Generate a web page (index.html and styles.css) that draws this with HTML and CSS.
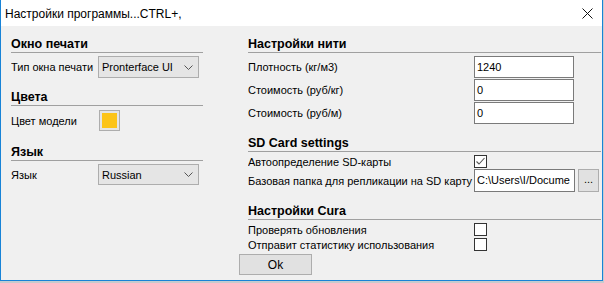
FILE: index.html
```html
<!DOCTYPE html>
<html lang="ru">
<head>
  <meta charset="UTF-8" />
  <title>Настройки программы</title>
  <link rel="stylesheet" href="styles.css">
</head>
<body>

  <div class="window">
    <div class="titlebar">
      <span class="title">Настройки программы...CTRL+,</span>
      <svg class="close" width="11" height="11" viewBox="0 0 11 11">
        <path d="M0.5 0.5 L10.5 10.5 M10.5 0.5 L0.5 10.5" stroke="#111" stroke-width="1" fill="none" />
      </svg>
    </div>

    <div class="content">
      <div class="columns">

        <!-- левая колонка -->
        <div class="col col-left">
          <h2 class="group-title">Окно печати</h2>
          <div class="row row-first">
            <span class="label">Тип окна печати</span>
            <div class="select">
              <span>Pronterface UI</span>
              <svg class="chevron" width="9" height="5" viewBox="0 0 9 5"><path d="M0.5 0.5 L4.5 4.5 L8.5 0.5" stroke="#555" fill="none" /></svg>
            </div>
          </div>

          <h2 class="group-title colors-title">Цвета</h2>
          <div class="row row-swatch">
            <span class="label">Цвет модели</span>
            <div class="swatch"><div class="swatch-fill"></div></div>
          </div>

          <h2 class="group-title lang-title">Язык</h2>
          <div class="row row-first">
            <span class="label">Язык</span>
            <div class="select select-short">
              <span>Russian</span>
              <svg class="chevron" width="9" height="5" viewBox="0 0 9 5"><path d="M0.5 0.5 L4.5 4.5 L8.5 0.5" stroke="#555" fill="none" /></svg>
            </div>
          </div>
        </div>

        <!-- правая колонка -->
        <div class="col col-right">
          <h2 class="group-title">Настройки нити</h2>
          <div class="row row-first">
            <span class="label wide">Плотность (кг/м3)</span>
            <div class="input">1240</div>
          </div>
          <div class="row row-next">
            <span class="label wide">Стоимость (руб/кг)</span>
            <div class="input">0</div>
          </div>
          <div class="row row-next">
            <span class="label wide">Стоимость (руб/м)</span>
            <div class="input">0</div>
          </div>

          <h2 class="group-title sd-title">SD Card settings</h2>
          <div class="row row-check">
            <span class="label wide">Автоопределение SD-карты</span>
            <div class="checkbox">
              <svg width="11" height="11" viewBox="0 0 11 11"><path d="M1.5 5.5 L4 8 L9.5 2" stroke="#555" stroke-width="1.1" fill="none" /></svg>
            </div>
          </div>
          <div class="row row-path">
            <span class="label wide">Базовая папка для репликации на SD карту</span>
            <div class="input input-path">C:\Users\I/Docume</div>
            <div class="browse">...</div>
          </div>

          <h2 class="group-title cura-title">Настройки Cura</h2>
          <div class="row row-check first-check">
            <span class="label wide">Проверять обновления</span>
            <div class="checkbox"></div>
          </div>
          <div class="row row-check second-check">
            <span class="label wide">Отправит статистику использования</span>
            <div class="checkbox"></div>
          </div>
        </div>

      </div>

      <div class="footer">
        <button class="ok">Ok</button>
      </div>
    </div>
  </div>

</body>
</html>
```

FILE: styles.css
```css
html {
  background: #c7cbce;
}

body {
  margin: 0;
  font-family: 'Liberation Sans', Arial, sans-serif;
  font-size: 11px;
  color: #000;
}

.window {
  width: 603px;
  height: 281px;
  box-sizing: border-box;
  border: 1px solid #1883d7;
  border-top: none;
  background: #f0f0f0;
}

.titlebar {
  height: 26px;
  background: #fff;
  display: flex;
  align-items: center;
  padding-left: 4px;
  padding-right: 9px;
}

.title {
  flex: 1;
  font-size: 12px;
  padding-top: 1px;
}

.close {
  display: block;
  margin-top: 1px;
}

.content {
  padding-left: 10px;
  padding-top: 10px;
}

.columns {
  display: flex;
  align-items: flex-start;
  gap: 45px;
}

.col-left {
  width: 192px;
}

.col-right {
  width: 353px;
}

.group-title {
  margin: 0;
  font-size: 12.5px;
  font-weight: bold;
  line-height: 16px;
  border-bottom: 1px solid #a0a0a0;
}

.colors-title {
  margin-top: 11px;
}

.lang-title {
  margin-top: 13px;
}

.sd-title {
  margin-top: 11px;
}

.cura-title {
  margin-top: 11px;
}

.row {
  display: flex;
  align-items: center;
}

.row-first {
  margin-top: 3px;
}

.row-next {
  margin-top: 1px;
}

.row-swatch {
  margin-top: 4px;
}

.row-check {
  height: 13px;
  margin-top: 3px;
}

.second-check {
  margin-top: 2px;
}

.row-path {
  margin-top: 1px;
}

.label {
  width: 87px;
  flex-shrink: 0;
  white-space: nowrap;
  overflow: hidden;
}

.label.wide {
  width: 226px;
}

.select {
  width: 101px;
  height: 22px;
  flex-shrink: 0;
  box-sizing: border-box;
  border: 1px solid #adadad;
  background: #e5e5e5;
  display: flex;
  align-items: center;
  justify-content: space-between;
  padding: 0 5px 0 3px;
}

.select-short {
  height: 21px;
}

.chevron {
  display: block;
}

.swatch {
  width: 21px;
  height: 21px;
  flex-shrink: 0;
  box-sizing: border-box;
  margin-left: 1px;
  border: 1px solid #adadad;
  background: #e5e5e5;
  padding: 2px;
}

.swatch-fill {
  width: 15px;
  height: 15px;
  background: #fcc419;
}

.input {
  width: 100px;
  height: 22px;
  flex-shrink: 0;
  box-sizing: border-box;
  border: 1px solid #7a7a7a;
  background: #fff;
  padding-left: 2px;
  line-height: 20px;
  overflow: hidden;
  white-space: nowrap;
}

.input-path {
  width: 101px;
  height: 23px;
  line-height: 21px;
}

.browse {
  width: 21px;
  height: 23px;
  flex-shrink: 0;
  box-sizing: border-box;
  margin-left: 3px;
  border: 1px solid #adadad;
  background: #e1e1e1;
  text-align: center;
  line-height: 19px;
  font-size: 11px;
}

.checkbox {
  width: 13px;
  height: 13px;
  flex-shrink: 0;
  box-sizing: border-box;
  border: 1px solid #333;
  background: #fff;
  display: flex;
  align-items: center;
  justify-content: center;
}

.checkbox svg {
  display: block;
}

.footer {
  margin-top: 3px;
}

.ok {
  margin-left: 228px;
  width: 73px;
  height: 21px;
  border: 1px solid #adadad;
  background: #e1e1e1;
  font-family: 'Liberation Sans', Arial, sans-serif;
  font-size: 12px;
  color: #000;
  padding: 0;
}
```
